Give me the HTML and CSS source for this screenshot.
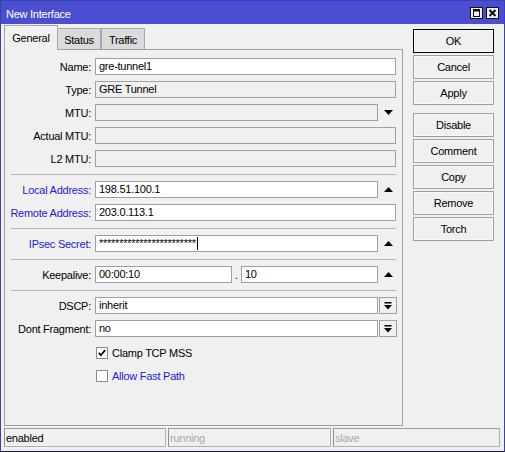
FILE: index.html
```html
<!DOCTYPE html>
<html>
<head>
<meta charset="utf-8">
<link rel="stylesheet" href="styles.css">
</head>
<body>
<div class="window">
  <div class="titlebar">
    <span class="title">New Interface</span>
    <div class="tb-buttons">
      <svg class="tbtn" width="13" height="12" viewBox="0 0 13 12"><rect x="0.5" y="0.5" width="12" height="11" fill="#f0f0f0" stroke="#111"/><rect x="3.5" y="2.5" width="6" height="7" fill="none" stroke="#111"/><line x1="3" y1="3.5" x2="10" y2="3.5" stroke="#111" stroke-width="2"/></svg>
      <svg class="tbtn" width="13" height="12" viewBox="0 0 13 12"><rect x="0.5" y="0.5" width="12" height="11" fill="#f0f0f0" stroke="#111"/><path d="M3.5 3 L9.5 9 M9.5 3 L3.5 9" stroke="#111" stroke-width="2"/></svg>
    </div>
  </div>
  <div class="main">
    <div class="left">
      <div class="tabs">
        <div class="tab active">General</div>
        <div class="tab status">Status</div>
        <div class="tab">Traffic</div>
      </div>
      <div class="panel">
        <div class="row"><span class="label">Name:</span><div class="field">gre-tunnel1</div></div>
        <div class="row"><span class="label">Type:</span><div class="field dis">GRE Tunnel</div></div>
        <div class="row"><span class="label">MTU:</span><div class="field dis short"></div><span class="arrow"><svg width="9" height="5" viewBox="0 0 9 5"><polygon points="0,0 9,0 4.5,5" fill="#000"/></svg></span></div>
        <div class="row"><span class="label">Actual MTU:</span><div class="field dis"></div></div>
        <div class="row"><span class="label">L2 MTU:</span><div class="field dis"></div></div>
        <div class="sep"></div>
        <div class="row"><span class="label blue">Local Address:</span><div class="field short">198.51.100.1</div><span class="arrow"><svg width="9" height="5" viewBox="0 0 9 5"><polygon points="0,5 9,5 4.5,0" fill="#000"/></svg></span></div>
        <div class="row"><span class="label blue">Remote Address:</span><div class="field">203.0.113.1</div></div>
        <div class="sep"></div>
        <div class="row"><span class="label blue">IPsec Secret:</span><div class="field short">************************<span class="caret"></span></div><span class="arrow"><svg width="9" height="5" viewBox="0 0 9 5"><polygon points="0,5 9,5 4.5,0" fill="#000"/></svg></span></div>
        <div class="sep"></div>
        <div class="row"><span class="label">Keepalive:</span><div class="field ka">00:00:10</div><span class="dot">.</span><div class="field ka">10</div><span class="arrow"><svg width="9" height="5" viewBox="0 0 9 5"><polygon points="0,5 9,5 4.5,0" fill="#000"/></svg></span></div>
        <div class="sep"></div>
        <div class="row"><span class="label">DSCP:</span><div class="field short">inherit</div><span class="ddbtn"><svg width="8" height="8" viewBox="0 0 8 8"><rect x="0.5" y="0" width="7" height="1.5" fill="#000"/><polygon points="0,3 8,3 4,7.5" fill="#000"/></svg></span></div>
        <div class="row"><span class="label">Dont Fragment:</span><div class="field short">no</div><span class="ddbtn"><svg width="8" height="8" viewBox="0 0 8 8"><rect x="0.5" y="0" width="7" height="1.5" fill="#000"/><polygon points="0,3 8,3 4,7.5" fill="#000"/></svg></span></div>
        <div class="row check-row first"><svg class="cb" width="12" height="12" viewBox="0 0 12 12"><rect x="0.5" y="0.5" width="11" height="11" fill="#fff" stroke="#8c8c8c"/><path d="M2.8 5.8 L4.9 8.2 L9.2 3" stroke="#000" stroke-width="1.8" fill="none"/></svg><span class="cb-text">Clamp TCP MSS</span></div>
        <div class="row check-row"><svg class="cb" width="12" height="12" viewBox="0 0 12 12"><rect x="0.5" y="0.5" width="11" height="11" fill="#fff" stroke="#8c8c8c"/></svg><span class="cb-text blue">Allow Fast Path</span></div>
      </div>
    </div>
    <div class="buttons">
      <div class="btn ok">OK</div>
      <div class="btn">Cancel</div>
      <div class="btn">Apply</div>
      <div class="btn gap">Disable</div>
      <div class="btn">Comment</div>
      <div class="btn">Copy</div>
      <div class="btn">Remove</div>
      <div class="btn">Torch</div>
    </div>
  </div>
  <div class="statusbar">
    <div class="pane p1">enabled</div>
    <div class="pane p2 muted">running</div>
    <div class="pane p3 muted">slave</div>
  </div>
</div>
</body>
</html>
```

FILE: styles.css
```css
* { box-sizing: border-box; }
body {
  margin: 0;
  font-family: "Liberation Sans", Arial, sans-serif;
  font-size: 11px;
  letter-spacing: -0.25px;
  color: #000;
}
.window {
  width: 505px;
  height: 452px;
  border: 1px solid #3d41b0;
  border-bottom-color: #1c1c40;
  background: #f0f0f0;
  display: flex;
  flex-direction: column;
}
.titlebar {
  height: 23px;
  flex: none;
  background: #4a4fd2;
  display: flex;
  align-items: center;
  padding: 0 5px 0 5px;
  color: #fff;
}
.title { padding-top: 3px; }
.tb-buttons {
  margin-left: auto;
  display: flex;
  gap: 3px;
  padding-top: 1px;
}
.tbtn { display: block; }
.main {
  flex: 1;
  display: flex;
  padding: 1px 0 0 3px;
  min-height: 0;
}
.left {
  width: 399px;
  display: flex;
  flex-direction: column;
}
.tabs {
  display: flex;
  height: 24px;
  align-items: flex-end;
  flex: none;
}
.tab {
  width: 44px;
  height: 21px;
  border: 1px solid #a8a8a8;
  border-bottom: none;
  background: #dadada;
  display: flex;
  align-items: center;
  justify-content: center;
  padding-top: 2px;
}
.tab.active {
  width: 54px;
  height: 25px;
  margin-bottom: -1px;
  padding-top: 0;
  background: #f0f0f0;
  position: relative;
  z-index: 1;
}
.tab.status { margin-left: -1px; }
.panel {
  flex: 1;
  border: 1px solid #a0a0a0;
  padding: 8px 6px 0 0;
  display: flex;
  flex-direction: column;
}
.row {
  display: flex;
  align-items: center;
  height: 17px;
  margin-bottom: 6px;
  flex: none;
}
.label {
  width: 86px;
  margin-right: 4px;
  text-align: right;
  white-space: nowrap;
  flex: none;
}
.blue { color: #2222d4; }
.field {
  flex: none;
  width: 301px;
  height: 17px;
  border: 1px solid #a0a0a0;
  background: #fff;
  padding-left: 3px;
  line-height: 15px;
  white-space: nowrap;
  overflow: hidden;
}
.field.short { width: 283px; }
.field.ka { width: 137px; }
.field.dis { background: #f0f0f0; }
.caret {
  display: inline-block;
  width: 1px;
  height: 13px;
  background: #000;
  vertical-align: -3px;
  margin-left: 1px;
}
.dot {
  width: 9px;
  text-align: center;
  flex: none;
}
.arrow {
  width: 18px;
  height: 17px;
  display: flex;
  align-items: center;
  justify-content: center;
  padding-left: 2px;
  flex: none;
}
.arrow svg { display: block; }
.ddbtn {
  width: 18px;
  height: 17px;
  margin-left: 1px;
  border: 1px solid #a0a0a0;
  background: #f0f0f0;
  display: flex;
  align-items: center;
  justify-content: center;
  flex: none;
}
.ddbtn svg { display: block; }
.sep {
  height: 1px;
  flex: none;
  background: #b4b4b4;
  margin: 1px 0 6px 6px;
}
.check-row { padding-left: 91px; }
.check-row.first { margin-top: 1px; }
.cb { display: block; flex: none; }
.cb-text { margin-left: 4px; }
.buttons {
  margin-left: 10px;
  padding-top: 4px;
  display: flex;
  flex-direction: column;
  gap: 2px;
}
.btn {
  width: 81px;
  height: 24px;
  border: 1px solid #a0a0a0;
  box-shadow: inset 0 0 0 1px #f8f8f8;
  background: #f0f0f0;
  display: flex;
  align-items: center;
  justify-content: center;
}
.btn.ok { border-color: #000; }
.btn.gap { margin-top: 6px; }
.statusbar {
  height: 19px;
  flex: none;
  margin: 2px 4px 4px 3px;
  display: flex;
  gap: 2px;
}
.pane {
  height: 19px;
  border: 1px solid #b0b0b0;
  border-left-color: #909090;
  border-top-color: #a0a0a0;
  padding-left: 1px;
  display: flex;
  align-items: center;
  white-space: nowrap;
}
.p1 { width: 162px; }
.p2 { width: 163px; }
.p3 { width: 167px; }
.muted { color: #a8a8a8; }
```
